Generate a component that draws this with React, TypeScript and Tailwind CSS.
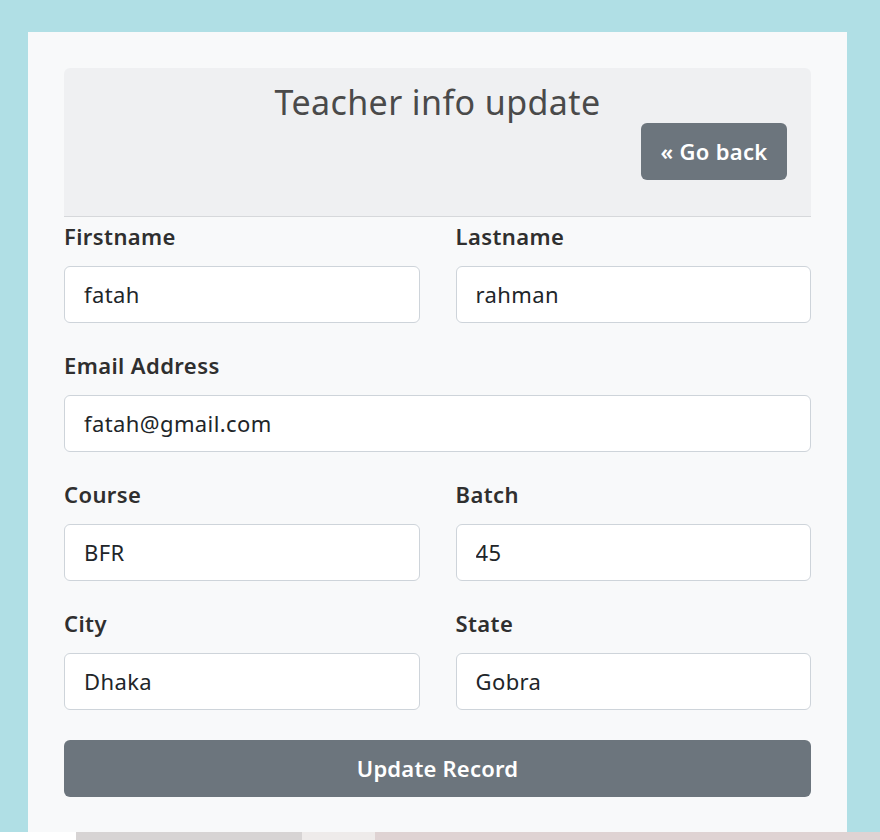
const font = { fontFamily: '"Noto Sans", "Open Sans", sans-serif' };

type FieldProps = {
  label: string;
  value: string;
};

const Field = ({ label, value }: FieldProps) => (
  <div className="flex min-w-0 flex-1 flex-col">
    <label className="mb-[14px] h-[30px] text-[22px] leading-[28px] font-semibold tracking-[0.4px] text-[#2f2f2f]">
      {label}
    </label>
    <input
      readOnly
      value={value}
      className="h-[57px] w-full rounded-[6px] border border-[#ced4da] bg-white px-[19px] pb-[2px] text-[22px] tracking-[0.4px] text-[#212529] outline-none"
      style={font}
    />
  </div>
);

export default function App() {
  return (
    <div className="flex min-h-[840px] flex-col bg-[#b0dfe5]" style={font}>
      <div className="px-[28px] pt-[32px] pr-[33px]">
        <div className="bg-[#f8f9fa] px-[36px] pt-[36px] pb-[35px]">
          <div className="flex flex-col rounded-t-[6px] border-b border-[#d6d8db] bg-[#eff0f2] px-[24px] pt-[14px] pb-[36px]">
            <h2 className="text-center text-[34px] leading-[40px] font-normal tracking-[0.4px] text-[#4a4a4a]">
              Teacher info update
            </h2>
            <div className="mt-[1px] flex justify-end">
              <button
                type="button"
                className="h-[57px] w-[146px] rounded-[6px] bg-[#6c757d] text-[22px] font-semibold tracking-[0.3px] text-white"
              >
                « Go back
              </button>
            </div>
          </div>

          <div className="mt-[5px] flex flex-col gap-[28px]">
            <div className="flex gap-[36px]">
              <Field label="Firstname" value="fatah" />
              <Field label="Lastname" value="rahman" />
            </div>
            <div className="flex">
              <Field label="Email Address" value="fatah@gmail.com" />
            </div>
            <div className="flex gap-[36px]">
              <Field label="Course" value="BFR" />
              <Field label="Batch" value="45" />
            </div>
            <div className="flex gap-[36px]">
              <Field label="City" value="Dhaka" />
              <Field label="State" value="Gobra" />
            </div>
          </div>

          <button
            type="button"
            className="mt-[30px] h-[57px] w-full rounded-[6px] bg-[#6c757d] text-[22px] font-semibold tracking-[0.2px] text-white"
          >
            Update Record
          </button>
        </div>
      </div>

      <div className="flex h-[8px]">
        <div className="w-[76px] bg-white" />
        <div className="w-[226px] bg-[#d7d4d4]" />
        <div className="w-[73px] bg-[#eeebea]" />
        <div className="flex-1 bg-[#dfd3d3]" />
      </div>
    </div>
  );
}
